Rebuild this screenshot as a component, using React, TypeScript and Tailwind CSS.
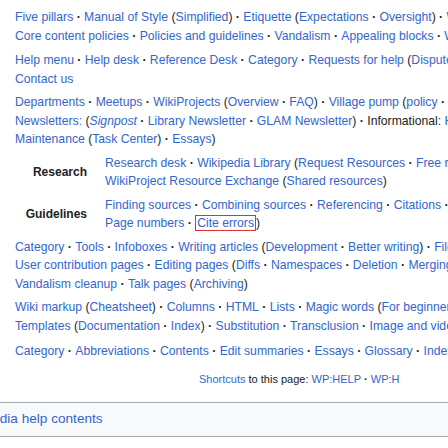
import React from "react";

const A = ({ children, i }: { children: React.ReactNode; i?: boolean }) => (
  <span className={"text-[#3366cc]" + (i ? " italic" : "")}>{children}</span>
);
const K = ({ children }: { children: React.ReactNode }) => (
  <span className="text-[#202122]">{children}</span>
);
const D = () => <span className="font-bold text-[#202122]"> · </span>;

const Line = ({ children }: { children: React.ReactNode }) => (
  <div className="whitespace-nowrap h-[18.5px] leading-[18.5px]">{children}</div>
);

const Row = ({ children, mt }: { children: React.ReactNode; mt: string }) => (
  <div className={"pl-[15px] " + mt}>{children}</div>
);

const GroupRow = ({ label, children, mt }: { label: string; children: React.ReactNode; mt: string }) => (
  <div className={"flex items-center " + mt}>
    <div className="w-[87px] shrink-0 text-right font-bold text-[#202122] text-[12px]">{label}</div>
    <div className="pl-[18px]">{children}</div>
  </div>
);

export default function App() {
  return (
    <div
      className="w-[448px] h-[448px] overflow-hidden bg-white text-[12.2px] text-[#202122]"
      style={{ fontFamily: '"Liberation Sans", Arial, sans-serif' }}
    >
      <div className="pt-[8px]">
        <Row mt="">
          <Line>
            <A>Five pillars</A><D /><A>Manual of Style</A> <K>(</K><A>Simplified</A><K>)</K><D /><A>Etiquette</A> <K>(</K><A>Expectations</A><D /><A>Oversight</A><K>)</K><D /><A>Wikipedia</A>
          </Line>
          <Line>
            <A>Core content policies</A><D /><A>Policies and guidelines</A><D /><A>Vandalism</A><D /><A>Appealing blocks</A><D /><A>What Wikipedia is not</A>
          </Line>
        </Row>
        <Row mt="mt-[6px]">
          <Line>
            <A>Help menu</A><D /><A>Help desk</A><D /><A>Reference Desk</A><D /><A>Category</A><D /><A>Requests for help</A> <K>(</K><A>Disputes</A>
          </Line>
          <Line>
            <A>Contact us</A>
          </Line>
        </Row>
        <Row mt="mt-[5px]">
          <Line>
            <A>Departments</A><D /><A>Meetups</A><D /><A>WikiProjects</A> <K>(</K><A>Overview</A><D /><A>FAQ</A><K>)</K><D /><A>Village pump</A> <K>(</K><A>policy</A><D /><A>technical</A>
          </Line>
          <Line>
            <A>Newsletters:</A> <K>(</K><A i>Signpost</A><D /><A>Library Newsletter</A><D /><A>GLAM Newsletter</A><K>)</K><D /><K>Informational:</K> <A>Help</A>
          </Line>
          <Line>
            <A>Maintenance</A> <K>(</K><A>Task Center</A><K>)</K><D /><A>Essays</A><K>)</K>
          </Line>
        </Row>
        <GroupRow label="Research" mt="mt-[5px]">
          <Line>
            <A>Research desk</A><D /><A>Wikipedia Library</A> <K>(</K><A>Request Resources</A><D /><A>Free</A> <A>resources</A>
          </Line>
          <Line>
            <A>WikiProject Resource Exchange</A> <K>(</K><A>Shared resources</A><K>)</K>
          </Line>
        </GroupRow>
        <GroupRow label="Guidelines" mt="mt-[5px]">
          <Line>
            <A>Finding sources</A><D /><A>Combining sources</A><D /><A>Referencing</A><D /><A>Citations</A><D /><A>Footnotes</A>
          </Line>
          <Line>
            <A>Page numbers</A><D /><span className="border border-[#d33] text-[#3366cc] px-px">Cite errors</span><K>)</K>
          </Line>
        </GroupRow>
        <Row mt="mt-[5px]">
          <Line>
            <A>Category</A><D /><A>Tools</A><D /><A>Infoboxes</A><D /><A>Writing articles</A> <K>(</K><A>Development</A><D /><A>Better writing</A><K>)</K><D /><A>Files</A>
          </Line>
          <Line>
            <A>User contribution pages</A><D /><A>Editing pages</A> <K>(</K><A>Diffs</A><D /><A>Namespaces</A><D /><A>Deletion</A><D /><A>Merging</A>
          </Line>
          <Line>
            <A>Vandalism cleanup</A><D /><A>Talk pages</A> <K>(</K><A>Archiving</A><K>)</K>
          </Line>
        </Row>
        <Row mt="mt-[5px]">
          <Line>
            <A>Wiki markup</A> <K>(</K><A>Cheatsheet</A><K>)</K><D /><A>Columns</A><D /><A>HTML</A><D /><A>Lists</A><D /><A>Magic words</A> <K>(</K><A>For beginners</A>
          </Line>
          <Line>
            <A>Templates</A> <K>(</K><A>Documentation</A><D /><A>Index</A><K>)</K><D /><A>Substitution</A><D /><A>Transclusion</A><D /><A>Image and video</A>
          </Line>
        </Row>
        <Row mt="mt-[7px]">
          <Line>
            <A>Category</A><D /><A>Abbreviations</A><D /><A>Contents</A><D /><A>Edit summaries</A><D /><A>Essays</A><D /><A>Glossary</A><D /><A>Index</A>
          </Line>
        </Row>
        <div className="mt-[10px] pl-[199px] whitespace-nowrap text-[11px] leading-[16px] h-[16px]">
          <A>Shortcuts</A> <K>to this page:</K> <A>WP:HELP</A><D /><A>WP:H</A>
        </div>
        <div className="mt-[15px] border-y border-[#a2a9b1] bg-[#f8f9fa] h-[35px] flex items-center whitespace-nowrap overflow-hidden">
          <span className="text-[13.6px] text-[#3366cc] ml-[-41px]">Wikipedia help contents</span>
        </div>
      </div>
    </div>
  );
}
